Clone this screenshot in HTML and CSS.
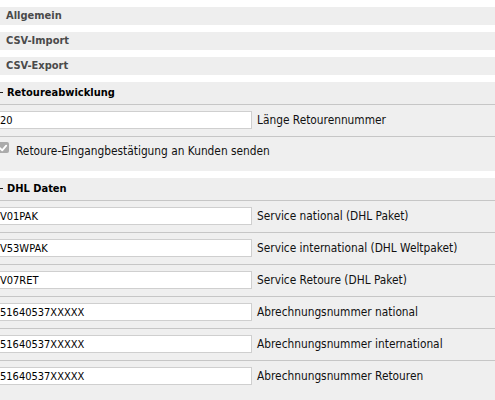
FILE: index.html
```html
<!DOCTYPE html>
<html lang="de">
<head>
<meta charset="utf-8">
<title>Einstellungen</title>
<link rel="stylesheet" href="styles.css">
</head>
<body>
<div class="page">
  <div class="section collapsed"><div class="legend">Allgemein</div></div>
  <div class="section collapsed"><div class="legend">CSV-Import</div></div>
  <div class="section collapsed"><div class="legend">CSV-Export</div></div>

  <div class="section open">
    <div class="legend"><span class="toggle"></span>Retoureabwicklung</div>
    <div class="body">
      <div class="row">
        <input class="field" type="text" value="20">
        <label class="label">Länge Retourennummer</label>
      </div>
      <div class="row check-row">
        <span class="checkbox"><svg viewBox="0 0 12 12" width="12" height="12"><path d="M3 6.2 L5.2 8.4 L9.2 3.6" fill="none" stroke="#fff" stroke-width="1.8" stroke-linecap="round" stroke-linejoin="round"/></svg></span>
        <span class="check-label">Retoure-Eingangbestätigung an Kunden senden</span>
      </div>
    </div>
  </div>

  <div class="section open">
    <div class="legend"><span class="toggle"></span>DHL Daten</div>
    <div class="body">
      <div class="row">
        <input class="field" type="text" value="V01PAK">
        <label class="label">Service national (DHL Paket)</label>
      </div>
      <div class="row">
        <input class="field" type="text" value="V53WPAK">
        <label class="label">Service international (DHL Weltpaket)</label>
      </div>
      <div class="row">
        <input class="field" type="text" value="V07RET">
        <label class="label">Service Retoure (DHL Paket)</label>
      </div>
      <div class="row">
        <input class="field" type="text" value="51640537XXXXX">
        <label class="label">Abrechnungsnummer national</label>
      </div>
      <div class="row">
        <input class="field" type="text" value="51640537XXXXX">
        <label class="label">Abrechnungsnummer international</label>
      </div>
      <div class="row">
        <input class="field" type="text" value="51640537XXXXX">
        <label class="label">Abrechnungsnummer Retouren</label>
      </div>
      <div class="spacer"></div>
    </div>
  </div>
</div>
</body>
</html>
```

FILE: styles.css
```css
html, body {
  margin: 0;
  padding: 0;
  background: #ffffff;
  overflow: hidden;
}

body {
  font-family: "DejaVu Sans Condensed", "DejaVu Sans", sans-serif;
  font-size: 11px;
  color: #000;
}

.page {
  padding-top: 7px;
}

.section + .section {
  margin-top: 7px;
}

.legend {
  background: #eeeeee;
  font-weight: bold;
  font-size: 11px;
}

.collapsed .legend {
  height: 18px;
  line-height: 18px;
  padding-left: 6px;
  color: #4a4a4a;
}

.open .legend {
  height: 22px;
  line-height: 22px;
  padding-left: 0;
  color: #000;
  display: flex;
  align-items: center;
}

.toggle {
  display: inline-block;
  width: 3px;
  height: 1px;
  background: #222;
  margin-right: 4px;
  margin-top: -1px;
}

.body {
  background: #efefef;
}

.row {
  border-top: 1px solid #c6c6c6;
  padding: 6px 0 7px;
  display: flex;
  align-items: center;
  gap: 5px;
}

.field {
  box-sizing: border-box;
  width: 255px;
  height: 18px;
  margin: 0 0 0 -3px;
  padding: 0 2px;
  border: 1px solid #cfcfcf;
  background: #fff;
  font-family: "DejaVu Sans Condensed", "DejaVu Sans", sans-serif;
  font-size: 11px;
  color: #000;
  outline: none;
}

.label {
  font-size: 11.8px;
  line-height: 15px;
  color: #111;
}

.check-row {
  align-items: flex-start;
  padding: 5px 0 0;
  height: 29px;
  gap: 7px;
}

.checkbox {
  display: inline-flex;
  align-items: center;
  justify-content: center;
  width: 12px;
  height: 11px;
  margin-left: -3px;
  background: #ababab;
  border-radius: 2px;
}

.check-label {
  margin-top: 2px;
  font-size: 11.8px;
  line-height: 15px;
  color: #111;
}

.spacer {
  height: 8px;
}
```
